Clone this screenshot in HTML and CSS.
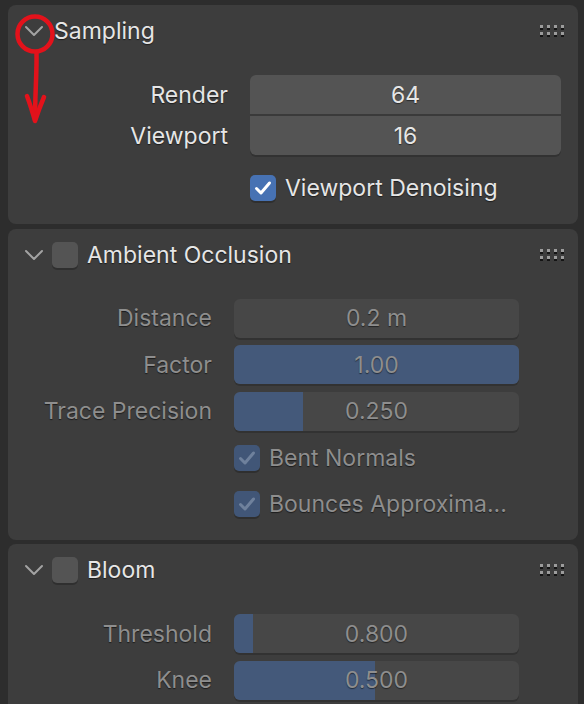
FILE: index.html
```html
<!DOCTYPE html>
<html lang="en">
<head>
<meta charset="utf-8">
<title>Render Properties</title>
<link rel="stylesheet" href="styles.css">
</head>
<body>
<div class="region">
  <section class="panel panel-sampling">
    <header class="panel-head">
      <svg class="chev" width="20" height="12" viewBox="0 0 20 12"><path d="M2 2 L10 10 L18 2"/></svg>
      <span class="title">Sampling</span>
      <svg class="grip" width="26" height="16" viewBox="0 0 26 16">
        <g class="grip-shadow"><rect x="0" y="3" width="3" height="3"/><rect x="7" y="3" width="3" height="3"/><rect x="14" y="3" width="3" height="3"/><rect x="21" y="3" width="3" height="3"/><rect x="0" y="10" width="3" height="3"/><rect x="7" y="10" width="3" height="3"/><rect x="14" y="10" width="3" height="3"/><rect x="21" y="10" width="3" height="3"/></g>
        <g class="grip-dot"><rect x="0" y="1" width="3" height="3"/><rect x="7" y="1" width="3" height="3"/><rect x="14" y="1" width="3" height="3"/><rect x="21" y="1" width="3" height="3"/><rect x="0" y="8" width="3" height="3"/><rect x="7" y="8" width="3" height="3"/><rect x="14" y="8" width="3" height="3"/><rect x="21" y="8" width="3" height="3"/></g>
      </svg>
    </header>
    <div class="props props-wide">
      <div class="row"><span class="label">Render</span><div class="field joined-top"><span class="value">64</span></div></div>
      <div class="row row-joined"><span class="label">Viewport</span><div class="field joined-bottom"><span class="value">16</span></div></div>
      <div class="row row-spaced"><span class="label"></span>
        <div class="check-row">
          <span class="cb cb-on"><svg width="26" height="26" viewBox="0 0 26 26"><path d="M6.5 13.5 L11 18 L19.5 8"/></svg></span>
          <span class="check-text">Viewport Denoising</span>
        </div>
      </div>
    </div>
  </section>

  <section class="panel panel-ao">
    <header class="panel-head">
      <svg class="chev" width="20" height="12" viewBox="0 0 20 12"><path d="M2 2 L10 10 L18 2"/></svg>
      <span class="cb cb-off"></span>
      <span class="title">Ambient Occlusion</span>
      <svg class="grip" width="26" height="16" viewBox="0 0 26 16">
        <g class="grip-shadow"><rect x="0" y="3" width="3" height="3"/><rect x="7" y="3" width="3" height="3"/><rect x="14" y="3" width="3" height="3"/><rect x="21" y="3" width="3" height="3"/><rect x="0" y="10" width="3" height="3"/><rect x="7" y="10" width="3" height="3"/><rect x="14" y="10" width="3" height="3"/><rect x="21" y="10" width="3" height="3"/></g>
        <g class="grip-dot"><rect x="0" y="1" width="3" height="3"/><rect x="7" y="1" width="3" height="3"/><rect x="14" y="1" width="3" height="3"/><rect x="21" y="1" width="3" height="3"/><rect x="0" y="8" width="3" height="3"/><rect x="7" y="8" width="3" height="3"/><rect x="14" y="8" width="3" height="3"/><rect x="21" y="8" width="3" height="3"/></g>
      </svg>
    </header>
    <div class="props props-narrow disabled">
      <div class="row"><span class="label">Distance</span><div class="field"><span class="value">0.2 m</span></div></div>
      <div class="row row-gap"><span class="label">Factor</span><div class="field"><span class="fill" style="width:100%"></span><span class="value">1.00</span></div></div>
      <div class="row row-gap"><span class="label">Trace Precision</span><div class="field"><span class="fill" style="width:24.2%"></span><span class="value">0.250</span></div></div>
      <div class="row row-gap"><span class="label"></span>
        <div class="check-row">
          <span class="cb cb-on"><svg width="26" height="26" viewBox="0 0 26 26"><path d="M6.5 13.5 L11 18 L19.5 8"/></svg></span>
          <span class="check-text">Bent Normals</span>
        </div>
      </div>
      <div class="row row-gap"><span class="label"></span>
        <div class="check-row">
          <span class="cb cb-on"><svg width="26" height="26" viewBox="0 0 26 26"><path d="M6.5 13.5 L11 18 L19.5 8"/></svg></span>
          <span class="check-text">Bounces Approxima...</span>
        </div>
      </div>
    </div>
  </section>

  <section class="panel panel-bloom">
    <header class="panel-head">
      <svg class="chev" width="20" height="12" viewBox="0 0 20 12"><path d="M2 2 L10 10 L18 2"/></svg>
      <span class="cb cb-off"></span>
      <span class="title">Bloom</span>
      <svg class="grip" width="26" height="16" viewBox="0 0 26 16">
        <g class="grip-shadow"><rect x="0" y="3" width="3" height="3"/><rect x="7" y="3" width="3" height="3"/><rect x="14" y="3" width="3" height="3"/><rect x="21" y="3" width="3" height="3"/><rect x="0" y="10" width="3" height="3"/><rect x="7" y="10" width="3" height="3"/><rect x="14" y="10" width="3" height="3"/><rect x="21" y="10" width="3" height="3"/></g>
        <g class="grip-dot"><rect x="0" y="1" width="3" height="3"/><rect x="7" y="1" width="3" height="3"/><rect x="14" y="1" width="3" height="3"/><rect x="21" y="1" width="3" height="3"/><rect x="0" y="8" width="3" height="3"/><rect x="7" y="8" width="3" height="3"/><rect x="14" y="8" width="3" height="3"/><rect x="21" y="8" width="3" height="3"/></g>
      </svg>
    </header>
    <div class="props props-narrow disabled">
      <div class="row"><span class="label">Threshold</span><div class="field"><span class="fill" style="width:6.7%"></span><span class="value">0.800</span></div></div>
      <div class="row row-gap"><span class="label">Knee</span><div class="field"><span class="fill" style="width:49.5%"></span><span class="value">0.500</span></div></div>
    </div>
  </section>
</div>

<svg class="annotation" width="584" height="704" viewBox="0 0 584 704">
  <circle cx="35" cy="34" r="17.5" />
  <path d="M36.5 52 C37 70 35 95 35 120" />
  <path d="M27 96 C30 104 33 114 35 121 C38 112 41 104 44 97" />
</svg>
</body>
</html>
```

FILE: styles.css
```css
* { box-sizing: border-box; }

html, body {
  margin: 0;
  padding: 0;
  width: 584px;
  height: 704px;
  overflow: hidden;
  background: #2d2d2d;
  font-family: Inter, "Noto Sans", "DejaVu Sans", sans-serif;
  font-size: 23px;
  color: #e6e6e6;
}

body { position: relative; }

.region {
  display: flex;
  flex-direction: column;
  gap: 4.5px;
  padding: 5px 6px 0 8px;
}

.panel {
  background: #3d3d3d;
  border-radius: 8px;
  padding-bottom: 16px;
}

.panel-sampling { padding-bottom: 16.5px; }

.panel-head {
  display: flex;
  align-items: center;
  height: 52px;
  padding: 0 12px 0 16px;
}

.chev {
  flex: none;
  fill: none;
  stroke: #a3a3a3;
  stroke-width: 2;
  stroke-linecap: round;
  stroke-linejoin: round;
}

.title {
  margin-left: 10px;
  text-shadow: 0 1px 1px rgba(0, 0, 0, 0.55);
  flex: 1;
}

.panel-head .cb { margin-left: 8px; }
.panel-head .cb + .title { margin-left: 9px; }

.grip { flex: none; margin-top: 2px; }
.grip-dot { fill: #9c9c9c; }
.grip-shadow { fill: #141414; }

.props {
  margin-top: 18px;
  display: flex;
  flex-direction: column;
}

.row {
  display: flex;
  align-items: center;
  height: 39px;
}

.row-joined { margin-top: 2px; }
.row-spaced { margin-top: 13.5px; }
.row-gap { margin-top: 7.5px; }

.label {
  flex: none;
  text-align: right;
  text-shadow: 0 1px 1px rgba(0, 0, 0, 0.55);
  white-space: nowrap;
}

.props-wide .label { width: 220px; margin-right: 22px; }
.props-wide .field, .props-wide .check-row { width: 311px; }

.props-narrow .label { width: 204px; margin-right: 22px; }
.props-narrow .field, .props-narrow .check-row { width: 285px; }

.field {
  position: relative;
  height: 39px;
  background: #545454;
  border-radius: 6px;
  box-shadow: 0 2px 0 rgba(0, 0, 0, 0.18);
  overflow: hidden;
  display: flex;
  align-items: center;
  justify-content: center;
}

.field.joined-top { border-radius: 6px 6px 0 0; box-shadow: 0 2px 0 #3a3a3a; }
.field.joined-bottom { border-radius: 0 0 6px 6px; }

.fill {
  position: absolute;
  left: 0;
  top: 0;
  bottom: 0;
  background: #4772b3;
}

.value {
  position: relative;
  text-shadow: 0 1px 1px rgba(0, 0, 0, 0.5);
}

.check-row {
  display: flex;
  align-items: center;
  height: 39px;
}

.check-text {
  margin-left: 9px;
  text-shadow: 0 1px 1px rgba(0, 0, 0, 0.55);
  white-space: nowrap;
}

.cb {
  flex: none;
  width: 26px;
  height: 26px;
  border-radius: 5px;
  box-shadow: 0 2px 0 rgba(0, 0, 0, 0.22);
  display: block;
}

.cb svg { display: block; }

.cb-off { background: #545454; }

.cb-on { background: #4772b3; }

.cb-on path {
  fill: none;
  stroke: #ffffff;
  stroke-width: 3;
  stroke-linecap: round;
  stroke-linejoin: round;
}

/* disabled (inactive) property groups */
.disabled .label,
.disabled .value,
.disabled .check-text { color: #8e8e8e; }

.disabled .field { background: #474747; }
.disabled .fill { background: #44597a; }
.disabled .cb-on { background: #415677; }
.disabled .cb-on path { stroke: #6f819c; }

.annotation {
  position: absolute;
  left: 0;
  top: 0;
  pointer-events: none;
  fill: none;
  stroke: #e3121b;
  stroke-width: 4.5;
  stroke-linecap: round;
  stroke-linejoin: round;
}
```
